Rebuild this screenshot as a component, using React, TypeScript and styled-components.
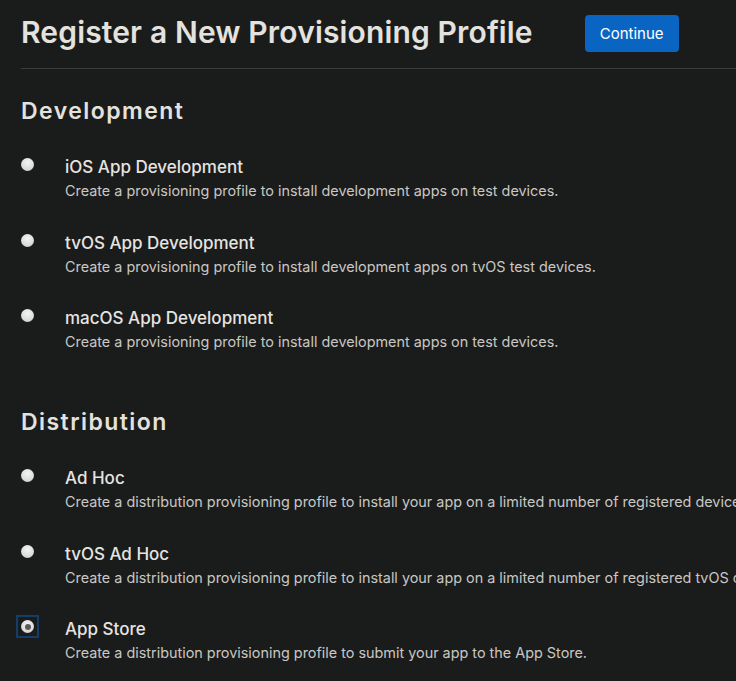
import React from "react";
import styled, { createGlobalStyle } from "styled-components";

const Global = createGlobalStyle`
  html, body { margin: 0; padding: 0; background: #1a1b1b; overflow: hidden; }
  body { font-family: Inter, "Noto Sans", sans-serif; color: #e6e4e0; }
`;

const Page = styled.div`
  padding: 0 0 0 21px;
  width: 900px;
`;

const Header = styled.div`
  display: flex;
  align-items: center;
  gap: 52px;
  height: 68px;
  border-bottom: 1px solid #3a3b3b;
`;

const Title = styled.h1`
  margin: 0;
  font-size: 30px;
  font-weight: 600;
  letter-spacing: 0.15px;
  color: #e4e2de;
  line-height: 1;
  padding-bottom: 4px;
`;

const Button = styled.button`
  height: 37px;
  padding: 0 15px;
  background: #0a65c2;
  color: #fff;
  border: none;
  border-radius: 4px;
  font-family: Inter, sans-serif;
  font-size: 15px;
  margin-bottom: 1px;
`;

const Section = styled.section<{ $top: number }>`
  display: flex;
  flex-direction: column;
  margin-top: ${(p) => p.$top}px;
`;

const SectionTitle = styled.h2`
  margin: 0;
  font-size: 23px;
  font-weight: 600;
  letter-spacing: 1.45px;
  color: #e4e2de;
  line-height: 28px;
`;

const List = styled.div`
  display: flex;
  flex-direction: column;
  gap: 29.5px;
  margin-top: 31px;
`;

const Option = styled.label`
  display: grid;
  grid-template-columns: 44px 1fr;
  align-items: start;
`;

const Radio = styled.span<{ $checked?: boolean }>`
  display: block;
  width: 13px;
  height: 13px;
  margin-top: 2px;
  outline: ${(p) => (p.$checked ? "2px solid #143e6a" : "none")};
  outline-offset: 3px;
  position: relative;
  &::before {
    content: "";
    position: absolute;
    inset: 0;
    border-radius: 50%;
    background: radial-gradient(circle at 50% 35%, #f4f4f4 0%, #dcdcdc 60%, #c4c4c4 100%);
  }
  &::after {
    content: "";
    display: ${(p) => (p.$checked ? "block" : "none")};
    position: absolute;
    left: 3.5px;
    top: 3.5px;
    width: 6px;
    height: 6px;
    border-radius: 50%;
    background: #5a5a5a;
  }
`;

const Text = styled.div`
  display: flex;
  flex-direction: column;
  white-space: nowrap;
`;

const OptTitle = styled.div`
  font-size: 17px;
  font-weight: 500;
  color: #e6e4e0;
  line-height: 22px;
`;

const OptDesc = styled.div`
  font-size: 14.4px;
  color: #c9c7c3;
  line-height: 22px;
  margin-top: 2px;
`;

const dev = [
  ["iOS App Development", "Create a provisioning profile to install development apps on test devices."],
  ["tvOS App Development", "Create a provisioning profile to install development apps on tvOS test devices."],
  ["macOS App Development", "Create a provisioning profile to install development apps on test devices."],
];
const dist = [
  ["Ad Hoc", "Create a distribution provisioning profile to install your app on a limited number of registered devices."],
  ["tvOS Ad Hoc", "Create a distribution provisioning profile to install your app on a limited number of registered tvOS devices."],
  ["App Store", "Create a distribution provisioning profile to submit your app to the App Store."],
];

export default function App() {
  return (
    <>
      <Global />
      <Page>
        <Header>
          <Title>Register a New Provisioning Profile</Title>
          <Button>Continue</Button>
        </Header>
        <Section $top={28}>
          <SectionTitle>Development</SectionTitle>
          <List>
            {dev.map(([t, d]) => (
              <Option key={t}>
                <Radio />
                <Text>
                  <OptTitle>{t}</OptTitle>
                  <OptDesc>{d}</OptDesc>
                </Text>
              </Option>
            ))}
          </List>
        </Section>
        <Section $top={55}>
          <SectionTitle>Distribution</SectionTitle>
          <List>
            {dist.map(([t, d], i) => (
              <Option key={t}>
                <Radio $checked={i === 2} />
                <Text>
                  <OptTitle>{t}</OptTitle>
                  <OptDesc>{d}</OptDesc>
                </Text>
              </Option>
            ))}
          </List>
        </Section>
      </Page>
    </>
  );
}
